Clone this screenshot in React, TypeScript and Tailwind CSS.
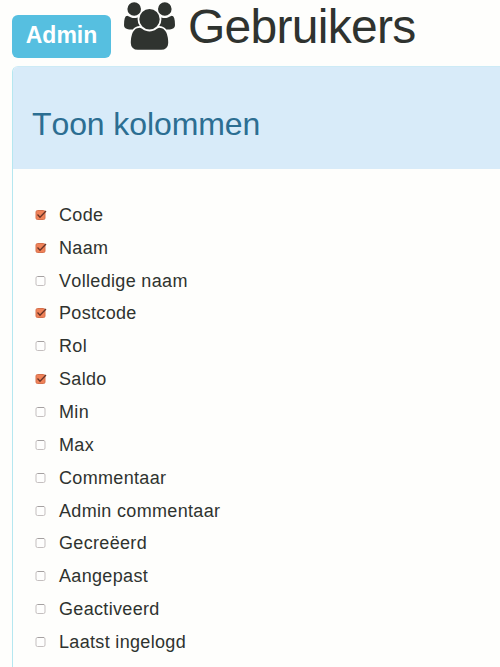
const columns = [
  { label: 'Code', checked: true },
  { label: 'Naam', checked: true },
  { label: 'Volledige naam', checked: false },
  { label: 'Postcode', checked: true },
  { label: 'Rol', checked: false },
  { label: 'Saldo', checked: true },
  { label: 'Min', checked: false },
  { label: 'Max', checked: false },
  { label: 'Commentaar', checked: false },
  { label: 'Admin commentaar', checked: false },
  { label: 'Gecreëerd', checked: false },
  { label: 'Aangepast', checked: false },
  { label: 'Geactiveerd', checked: false },
  { label: 'Laatst ingelogd', checked: false },
];

function UsersIcon() {
  return (
    <svg viewBox="0 0 1920 1792" className="ml-[13px] mt-[2px] h-[48px] w-[51px] shrink-0 fill-[#2f332f]" aria-hidden="true">
      <path d="M593 896q-162 5-265 128h-134q-82 0-138-40.5t-56-118.5q0-353 124-353 6 0 43.5 21t97.5 42.5 119 21.5q67 0 133-23-5 37-5 66 0 139 81 256zm1071 637q0 120-73 189.5t-194 69.5h-874q-121 0-194-69.5t-73-189.5q0-53 3.5-103.5t14-109 26.5-108.5 43-97.5 62-81 85.5-53.5 111.5-20q10 0 43 21.5t73 48 107 48 135 21.5 135-21.5 107-48 73-48 43-21.5q61 0 111.5 20t85.5 53.5 62 81 43 97.5 26.5 108.5 14 109 3.5 103.5zm-1024-1277q0 106-75 181t-181 75-181-75-75-181 75-181 181-75 181 75 75 181zm704 384q0 159-112.5 271.5t-271.5 112.5-271.5-112.5-112.5-271.5 112.5-271.5 271.5-112.5 271.5 112.5 112.5 271.5zm576 225q0 78-56 118.5t-138 40.5h-134q-103-123-265-128 81-117 81-256 0-29-5-66 66 23 133 23 59 0 119-21.5t97.5-42.5 43.5-21q124 0 124 353zm-128-609q0 106-75 181t-181 75-181-75-75-181 75-181 181-75 181 75 75 181z" />
    </svg>
  );
}

function CheckMark({ checked }: { checked: boolean }) {
  return (
    <svg viewBox="0 0 12 12" className="mr-3 size-3 shrink-0" role="checkbox" aria-checked={checked}>
      {checked ? (
        <>
          <rect x="1" y="1.5" width="9" height="9" rx="1.5" fill="#f08258" stroke="#d5704c" />
          <path d="M2.5 5.5 5 8.3 11 2" fill="none" stroke="#683326" strokeWidth="1.3" />
        </>
      ) : (
        <>
          <rect x="1" y="1.5" width="9" height="9" rx="1.5" fill="#fefefd" stroke="#c4bfbf" />
          <path d="M2.5 1.5H9" stroke="#a5a1a1" />
        </>
      )}
    </svg>
  );
}

export default function App() {
  return (
    <div className="flex h-[667px] w-[500px] flex-col overflow-hidden bg-[#fefefc] pl-3 font-['Liberation_Sans',Arial,sans-serif] text-[#2f332f] [font-kerning:none]">
      <h1 className="flex h-[66px] shrink-0 items-start">
        <span className="mt-[15px] flex h-[42.5px] w-[99px] shrink-0 items-center justify-center rounded-[6px] bg-[#56bfe0] pb-[2px] text-[23px] leading-none font-bold text-white">
          Admin
        </span>
        <UsersIcon />
        <span className="ml-[13px] text-[48px] leading-[53px] tracking-[-0.72px]">Gebruikers</span>
      </h1>
      <section className="min-h-0 w-[520px] flex-1 rounded-t-[6px] border-t border-l border-[#b5e7f0] border-t-[#cdebf6]">
        <header className="flex h-[102px] items-center rounded-t-[5px] bg-[#d8ebf9] pt-[11px] pl-[19px] text-[32px] leading-none tracking-[-0.1px] text-[#2c6e92]">
          <h2>Toon kolommen</h2>
        </header>
        <ul className="pt-[29.5px] pl-[22px]">
          {columns.map((column) => (
            <li key={column.label} className="flex h-[32.85px] items-center text-[18px] leading-none tracking-[0.33px]">
              <CheckMark checked={column.checked} />
              <span>{column.label}</span>
            </li>
          ))}
        </ul>
      </section>
    </div>
  );
}
